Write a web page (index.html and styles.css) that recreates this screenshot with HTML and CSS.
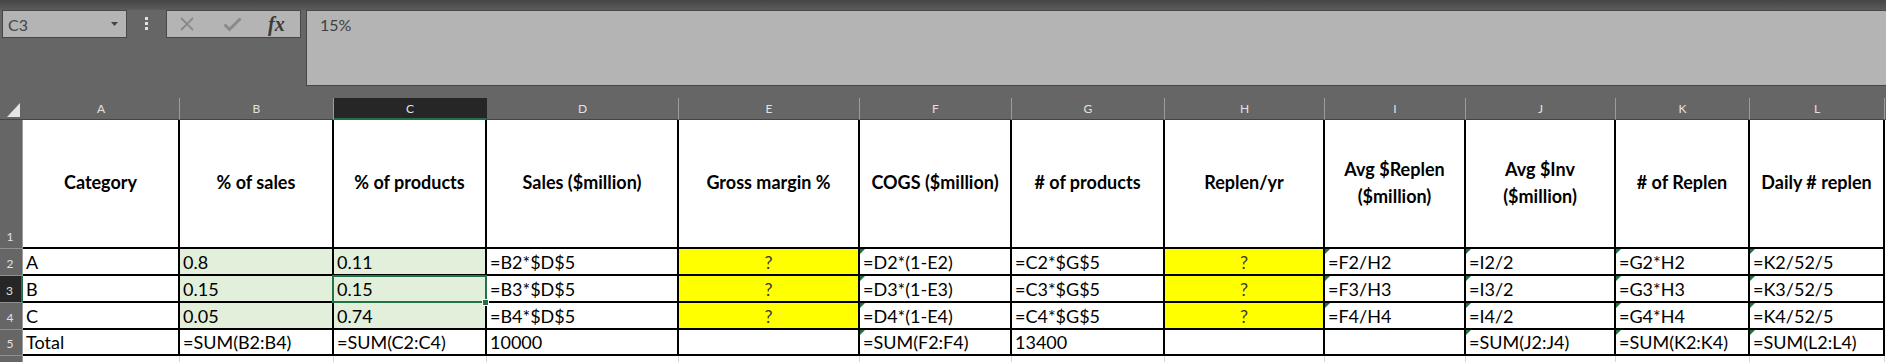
FILE: index.html
```html
<!DOCTYPE html>
<html>
<head>
<meta charset="utf-8">
<link rel="stylesheet" href="styles.css">
</head>
<body>
<div class="topbar"></div>
<div class="fbar-row">
  <div class="namebox"><span>C3</span><svg class="arrow" width="7" height="4" viewBox="0 0 7 4"><path d="M0 0H7L3.5 4Z" fill="#444"/></svg></div>
  <div class="grip"><span></span><span></span><span></span></div>
  <div class="btns">
    <svg class="ico-x" width="14" height="14" viewBox="0 0 14 14"><path d="M1 1L13 13M13 1L1 13" stroke="#8a8a8a" stroke-width="1.8" fill="none"/></svg>
    <svg class="ico-ok" width="19" height="15" viewBox="0 0 19 15"><path d="M1.5 7.5L6.5 12.5L17.5 1.5" stroke="#8a8a8a" stroke-width="3" fill="none"/></svg>
    <span class="fx">fx</span>
  </div>
  <div class="formula">15%</div>
</div>
<div class="sheet">
  <div class="corner"><svg width="23" height="21" viewBox="0 0 23 21"><path d="M7 19H20V5Z" fill="#e4e4e4"/></svg></div>
  <div class="ch">A</div><div class="ch">B</div><div class="ch sel">C</div><div class="ch">D</div><div class="ch">E</div><div class="ch">F</div><div class="ch">G</div><div class="ch">H</div><div class="ch">I</div><div class="ch">J</div><div class="ch">K</div><div class="ch">L</div><div class="ch end"></div>

  <div class="rh">1</div>
  <div class="c hd">Category</div>
  <div class="c hd">% of sales</div>
  <div class="c hd">% of products</div>
  <div class="c hd">Sales ($million)</div>
  <div class="c hd">Gross margin %</div>
  <div class="c hd">COGS ($million)</div>
  <div class="c hd"># of products</div>
  <div class="c hd">Replen/yr</div>
  <div class="c hd">Avg $Replen<br>($million)</div>
  <div class="c hd">Avg $Inv<br>($million)</div>
  <div class="c hd"># of Replen</div>
  <div class="c hd">Daily # replen</div>
  <div class="fill"></div>

  <div class="rh">2</div>
  <div class="c">A</div>
  <div class="c g">0.8</div>
  <div class="c g">0.11</div>
  <div class="c">=B2*$D$5</div>
  <div class="c y">?</div>
  <div class="c tri">=D2*(1-E2)</div>
  <div class="c">=C2*$G$5</div>
  <div class="c y">?</div>
  <div class="c tri">=F2/H2</div>
  <div class="c tri">=I2/2</div>
  <div class="c tri">=G2*H2</div>
  <div class="c tri">=K2/52/5</div>
  <div class="fill"></div>

  <div class="rh sel">3</div>
  <div class="c">B</div>
  <div class="c g">0.15</div>
  <div class="c g cur">0.15</div>
  <div class="c">=B3*$D$5</div>
  <div class="c y">?</div>
  <div class="c tri">=D3*(1-E3)</div>
  <div class="c">=C3*$G$5</div>
  <div class="c y">?</div>
  <div class="c tri">=F3/H3</div>
  <div class="c tri">=I3/2</div>
  <div class="c tri">=G3*H3</div>
  <div class="c tri">=K3/52/5</div>
  <div class="fill"></div>

  <div class="rh">4</div>
  <div class="c">C</div>
  <div class="c g">0.05</div>
  <div class="c g">0.74</div>
  <div class="c">=B4*$D$5</div>
  <div class="c y">?</div>
  <div class="c tri">=D4*(1-E4)</div>
  <div class="c">=C4*$G$5</div>
  <div class="c y">?</div>
  <div class="c tri">=F4/H4</div>
  <div class="c tri">=I4/2</div>
  <div class="c tri">=G4*H4</div>
  <div class="c tri">=K4/52/5</div>
  <div class="fill"></div>

  <div class="rh">5</div>
  <div class="c">Total</div>
  <div class="c">=SUM(B2:B4)</div>
  <div class="c">=SUM(C2:C4)</div>
  <div class="c">10000</div>
  <div class="c"></div>
  <div class="c tri">=SUM(F2:F4)</div>
  <div class="c">13400</div>
  <div class="c"></div>
  <div class="c"></div>
  <div class="c tri">=SUM(J2:J4)</div>
  <div class="c tri">=SUM(K2:K4)</div>
  <div class="c tri">=SUM(L2:L4)</div>
  <div class="fill"></div>

  <div class="rh last"></div>
  <div class="gl"></div><div class="gl"></div><div class="gl"></div><div class="gl"></div><div class="gl"></div><div class="gl"></div><div class="gl"></div><div class="gl"></div><div class="gl"></div><div class="gl"></div><div class="gl"></div><div class="gl"></div>
  <div class="fill"></div>
</div>
</body>
</html>
```

FILE: styles.css
```css
html, body {
  margin: 0;
  padding: 0;
}
body {
  width: 1886px;
  height: 362px;
  overflow: hidden;
  background: #666666;
  font-family: Lato, "Open Sans", sans-serif;
}
.topbar {
  height: 10px;
  background: linear-gradient(#454545, #5c5c5c);
}
.fbar-row {
  display: flex;
  align-items: flex-start;
  height: 76px;
  padding-left: 2px;
}
.namebox {
  width: 125px;
  height: 28px;
  box-sizing: border-box;
  background: #b4b4b4;
  border: 1px solid #474747;
  display: flex;
  align-items: center;
  justify-content: space-between;
  padding: 0 8px 0 5px;
  font-size: 16px;
  color: #454545;
}
.grip {
  width: 39px;
  display: flex;
  flex-direction: column;
  align-items: center;
  gap: 2px;
  padding-top: 7px;
}
.grip span {
  width: 3px;
  height: 3px;
  background: #e2e2e2;
}
.btns {
  width: 135px;
  height: 28px;
  box-sizing: border-box;
  background: #b4b4b4;
  border: 1px solid #474747;
  display: flex;
  align-items: center;
}
.ico-x {
  margin-left: 13px;
}
.ico-ok {
  margin-left: 29px;
}
.fx {
  margin-left: 26px;
  font-family: "Liberation Serif", serif;
  font-style: italic;
  font-weight: 700;
  font-size: 20px;
  color: #3a3a3a;
  line-height: 20px;
}
.formula {
  flex: 1;
  margin-left: 5px;
  height: 76px;
  box-sizing: border-box;
  background: #b4b4b4;
  border: 1px solid #474747;
  border-right: none;
  padding: 4px 13px;
  font-size: 16px;
  line-height: 20px;
  color: #404040;
}
.sheet {
  margin-top: 12px;
  display: grid;
  grid-template-columns: 23px 157px 154px 153px 192px 181px 152px 153px 160px 141px 150px 134px 135px 1fr;
  grid-template-rows: 22px 129px 27px 27px 27px 26px 6px;
}
.corner {
  background: #666666;
  border-bottom: 1px solid #444;
  box-sizing: border-box;
}
.corner svg {
  display: block;
}
.ch {
  box-sizing: border-box;
  background: #666666;
  border-right: 1px solid #9c9c9c;
  border-bottom: 1px solid #444;
  color: #e2e2e2;
  font-size: 12px;
  display: flex;
  align-items: center;
  justify-content: center;
}
.ch.sel {
  background: #262626;
  border-right-color: #262626;
  border-bottom: 2px solid #217346;
}
.ch.end {
  border-right: none;
}
.rh {
  box-sizing: border-box;
  background: #666666;
  border-right: 1px solid #9c9c9c;
  border-bottom: 1px solid #8f8f8f;
  color: #e2e2e2;
  font-size: 12px;
  line-height: 14px;
  display: flex;
  align-items: flex-end;
  justify-content: center;
  padding: 0 2px 4px 0;
}
.rh.sel {
  background: #262626;
  border-right: 2px solid #217346;
}
.rh.last {
  border-bottom: none;
}
.c {
  box-sizing: border-box;
  background: #ffffff;
  border-right: 2px solid #000;
  border-bottom: 2px solid #000;
  display: flex;
  align-items: flex-end;
  padding: 0 0 1px 3px;
  font-size: 18px;
  line-height: 22px;
  color: #000;
  white-space: nowrap;
}
.c.hd {
  align-items: center;
  justify-content: center;
  text-align: center;
  padding: 0 0 2px 0;
  font-weight: 700;
  line-height: 27px;
}
.c.g {
  background: #e2efda;
}
.c.y {
  background: #ffff00;
  justify-content: center;
  padding-left: 0;
  color: #3a3a3a;
}
.c.tri {
  position: relative;
}
.c.tri::before {
  content: "";
  position: absolute;
  left: 0;
  top: 0;
  border-top: 5px solid #217346;
  border-right: 5px solid transparent;
}
.c.cur {
  position: relative;
}
.c.cur::after {
  content: "";
  position: absolute;
  left: -2px;
  top: -1px;
  right: -2px;
  bottom: -2px;
  border: 2px solid #217346;
}
.c.cur::before {
  content: "";
  position: absolute;
  right: -4px;
  bottom: -5px;
  width: 5px;
  height: 5px;
  background: #217346;
  border: 1px solid #ffffff;
  z-index: 2;
}
.gl {
  background: #ffffff;
  border-right: 1px solid #d6d6d6;
}
.fill {
  background: #ffffff;
}
```
